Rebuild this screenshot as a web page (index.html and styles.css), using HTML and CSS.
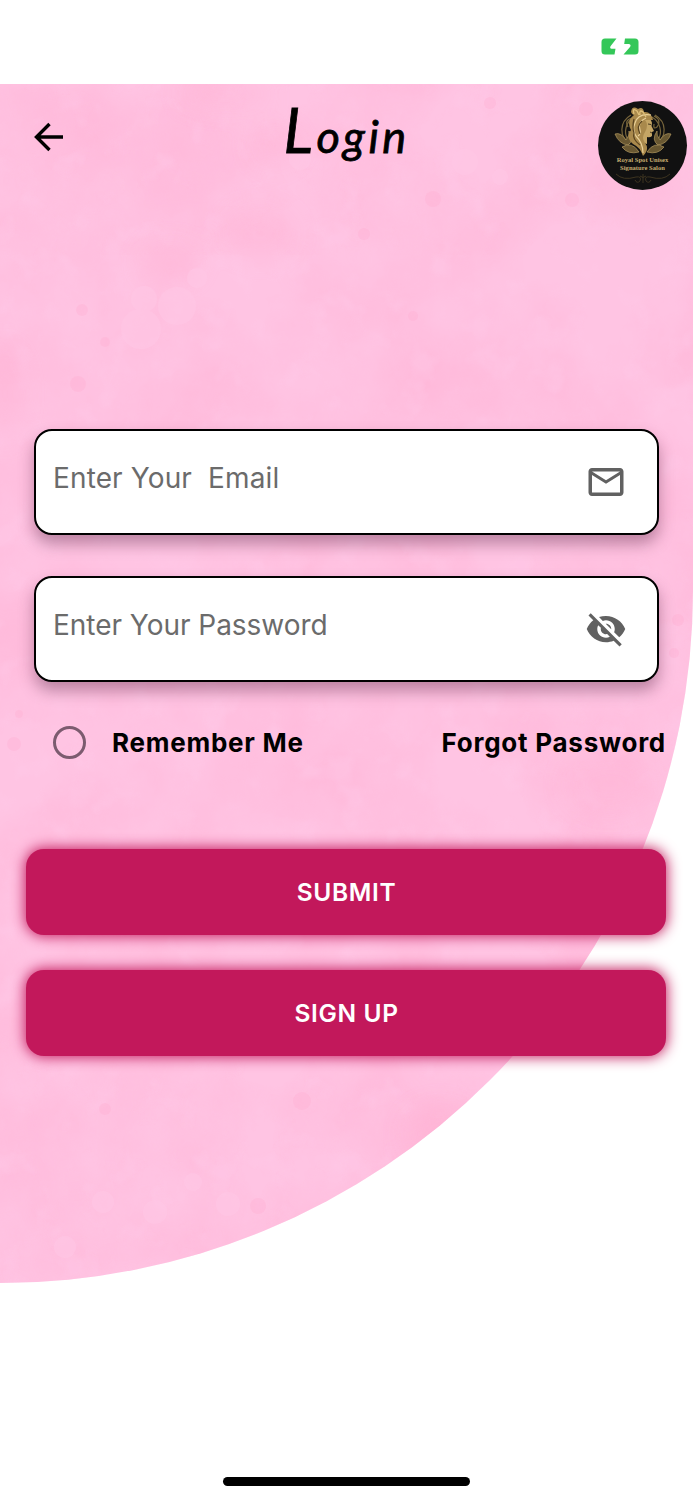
FILE: index.html
```
<!DOCTYPE html>
<html lang="en">

<head>
    <meta charset="UTF-8">
    <meta name="viewport" content="width=device-width, initial-scale=1.0">
    <title>Login</title>
    <link rel="stylesheet" href="styles.css">
</head>

<body>
    <div class="screen">
        <!-- pink paint behind the form -->
        <div class="paint">
            <svg width="693" height="1200" viewBox="0 0 693 1200">
                <defs>
                    <filter id="clouds" x="0" y="0" width="100%" height="100%" color-interpolation-filters="sRGB">
                        <feTurbulence type="fractalNoise" baseFrequency="0.009 0.008" numOctaves="6" seed="8" />
                        <feColorMatrix values="0 0 0 0 1  0 0 0 0 .69  0 0 0 0 .825  2 0 0 0 -.7" />
                    </filter>
                    <filter id="specks" x="0" y="0" width="100%" height="100%" color-interpolation-filters="sRGB">
                        <feTurbulence type="fractalNoise" baseFrequency="0.03" numOctaves="3" seed="21" />
                        <feColorMatrix values="0 0 0 0 1  0 0 0 0 .79  0 0 0 0 .91  0 4 0 0 -2.2" />
                    </filter>
                    <filter id="soft">
                        <feGaussianBlur stdDeviation="12" />
                    </filter>
                </defs>
                <rect width="693" height="1200" filter="url(#clouds)" opacity=".5" />
                <rect width="693" height="1200" filter="url(#specks)" opacity=".4" />
                <g fill="#ffabcd" opacity=".3" filter="url(#soft)">
                    <ellipse cx="275" cy="62" rx="22" ry="18" />
                    <ellipse cx="225" cy="10" rx="45" ry="14" />
                    <ellipse cx="260" cy="150" rx="35" ry="25" />
                    <ellipse cx="170" cy="180" rx="30" ry="20" />
                    <ellipse cx="5" cy="310" rx="20" ry="50" />
                    <ellipse cx="610" cy="700" rx="45" ry="30" />
                    <ellipse cx="440" cy="1050" rx="35" ry="28" />
                </g>
                <g fill="#ffc8e6" opacity=".5">
                    <circle cx="177" cy="222" r="19" />
                    <circle cx="141" cy="245" r="20" />
                    <circle cx="144" cy="215" r="13" />
                    <circle cx="197" cy="194" r="10" />
                    <circle cx="465" cy="78" r="13" />
                    <circle cx="500" cy="93" r="8" />
                    <circle cx="300" cy="75" r="11" />
                    <circle cx="228" cy="1120" r="12" />
                    <circle cx="193" cy="1098" r="9" />
                    <circle cx="103" cy="1118" r="11" />
                    <circle cx="155" cy="1128" r="12" />
                    <circle cx="65" cy="1163" r="11" />
                </g>
                <g fill="#ffacd0" opacity=".3">
                    <circle cx="82" cy="226" r="6" />
                    <circle cx="105" cy="258" r="5" />
                    <circle cx="78" cy="300" r="8" />
                    <circle cx="364" cy="150" r="6" />
                    <circle cx="413" cy="232" r="5" />
                    <circle cx="433" cy="115" r="8" />
                    <circle cx="572" cy="116" r="7" />
                    <circle cx="490" cy="19" r="6" />
                    <circle cx="586" cy="25" r="7" />
                    <circle cx="678" cy="536" r="6" />
                    <circle cx="674" cy="569" r="5" />
                    <circle cx="14" cy="660" r="7" />
                    <circle cx="19" cy="630" r="4" />
                    <circle cx="258" cy="1122" r="8" />
                    <circle cx="302" cy="1017" r="9" />
                    <circle cx="364" cy="1123" r="7" />
                    <circle cx="105" cy="1025" r="6" />
                </g>
            </svg>
        </div>

        <div class="statusbar">
            <svg class="battery" width="38" height="18" viewBox="0 0 38 18" fill="#34c759">
                <path d="M4 .5H15.500L9.500 8.200Q8.500 10.200 10.500 10.700H14.500L13.500 16.500H4Q.5 16.500 .5 13V4Q.5 .5 4 .5Z" />
                <path d="M24 .5H34Q37.500 .5 37.500 4V13Q37.500 16.500 34 16.500H22.500L29 9Q30.500 6.500 28 6H23.200Z" />
            </svg>
        </div>

        <div class="header">
            <svg class="back" width="30" height="30" viewBox="0 0 30 30" fill="none" stroke="#000" stroke-width="3.400">
                <path d="M29 15H3M15.500 2L2.500 15L15.500 28" />
            </svg>
            <h1>Login</h1>
            <div class="logo">
                <svg width="62" height="50" viewBox="0 0 62 50" fill="none">
                    <g stroke="#77653b" stroke-width="1.200">
                        <path d="M18 38C7 31 7 16 19 9M44 38C55 31 55 16 43 9" />
                        <path d="M16 34C11 26 14 16 22 11M46 34C51 26 48 16 40 11" />
                        <path d="M42 10Q50 14 45 21Q41 24 42 18M20 12Q12 14 16 21" />
                    </g>
                    <g fill="#695832" stroke="#b39a60" stroke-width=".7">
                        <path d="M3 28Q9 26 14 34Q18 29 17 25Q23 34 16 39Q7 38 3 28Z" />
                        <path d="M59 28Q53 26 48 34Q44 29 45 25Q39 34 46 39Q55 38 59 28Z" />
                        <path d="M10 41Q20 35 27 46Q16 49 10 41ZM52 41Q42 35 35 46Q46 49 52 41Z" />
                    </g>
                    <!-- face -->
                    <path d="M31 12Q39 11 40 17L39.500 20L42 25L40 26L40 30Q38 32 35 31L35 38Q29 37 28 30Z" fill="#c4a565" />
                    <path d="M36 18L39 18.500M38 26L40 27" stroke="#4d3b1c" />
                    <!-- hair -->
                    <path d="M41 14Q39 5 32 6Q31 0 26 3Q20 -1 19 6Q20 9 22 9Q14 15 19 24Q13 31 21 38Q28 41 31 50Q38 43 33 37Q29 32 33 26Q37 19 33 14Z" fill="#a9894c" />
                    <path d="M39 9Q26 7 23 17Q20 24 24 30Q31 37 31 47M34 12Q25 16 28 24Q29 28 26 30" stroke="#ead199" stroke-width="1.200" />
                    <path d="M22 13Q20 21 22 27Q20 33 28 39M30 15Q24 20 28 28" stroke="#59431f" stroke-width="1.200" />
                    <path d="M22 8Q20 1 25 5L27 9M28 9Q27 3 31 6L34 11" stroke="#e0c17b" stroke-width="1.300" />
                </svg>
                <p>Royal Spot Unisex<br>Signature Salon</p>
                <svg class="flourish" width="56" height="12" viewBox="0 0 56 12" fill="none" stroke="#3d3420">
                    <path d="M1 1Q8 8 21 4Q27 3 25 8Q22 11 20 7M55 1Q48 8 35 4Q29 3 31 8Q34 11 36 7M28 1V10M25 3Q28 6 31 3" />
                </svg>
            </div>
        </div>

        <form class="form">
            <div class="field">
                <input class="email" type="text" placeholder="Enter Your  Email">
                <svg width="42" height="42" viewBox="0 0 24 24" fill="#616161">
                    <path d="M22 6c0-1.100-.9-2-2-2H4c-1.100 0-2 .9-2 2v12c0 1.100.9 2 2 2h16c1.100 0 2-.9 2-2V6zm-2 0l-8 5-8-5h16zm0 12H4V8l8 5 8-5v10z" />
                </svg>
            </div>
            <div class="field">
                <input type="password" placeholder="Enter Your Password">
                <svg width="42" height="42" viewBox="0 0 24 24" fill="#616161">
                    <path d="M12 7c2.760 0 5 2.240 5 5 0 .65-.13 1.260-.36 1.830l2.920 2.920c1.510-1.260 2.700-2.890 3.430-4.750-1.730-4.390-6-7.500-11-7.500-1.400 0-2.740.25-3.980.7l2.160 2.160C10.740 7.130 11.350 7 12 7zM2 4.270l2.280 2.280.46.46C3.080 8.300 1.780 10.020 1 12c1.730 4.390 6 7.500 11 7.500 1.550 0 3.030-.3 4.380-.84l.42.42L19.730 22 21 20.730 3.270 3 2 4.270zM7.530 9.800l1.550 1.550c-.05.21-.08.43-.08.65 0 1.660 1.340 3 3 3 .22 0 .44-.03.65-.08l1.550 1.550c-.67.33-1.410.53-2.200.53-2.760 0-5-2.240-5-5 0-.79.2-1.530.53-2.200zm4.310-.78l3.150 3.150.02-.16c0-1.660-1.340-3-3-3l-.17.01z" />
                </svg>
            </div>

            <div class="options">
                <label class="remember">
                    <span class="radio"></span>
                    <span>Remember Me</span>
                </label>
                <span class="forgot">Forgot Password</span>
            </div>

            <div class="buttons">
                <button type="button">SUBMIT</button>
                <button type="button">SIGN UP</button>
            </div>
        </form>

        <div class="homebar"></div>
    </div>
</body>

</html>
```
FILE: styles.css
```
* {
    box-sizing: border-box;
}

body {
    margin: 0;
    background-color: #fff;
    color: #000;
    font-family: Inter, "Liberation Sans", sans-serif;
}

.screen {
    position: relative;
    display: flex;
    flex-direction: column;
    width: 693px;
    height: 1500px;
    overflow: hidden;
}

.paint {
    position: absolute;
    top: 84px;
    left: 0;
    z-index: -1;
    width: 693px;
    height: 1199px;
    overflow: hidden;
    background-color: #ffc4e3;
    border-bottom-right-radius: 693px;
}

.statusbar {
    display: flex;
    justify-content: flex-end;
    height: 84px;
    padding: 38px 54px 0 0;
}

.header {
    display: grid;
    grid-template-columns: 89px 1fr 89px;
    height: 345px;
    padding: 17px 6px 0 6px;
    align-items: start;
}

.back {
    margin: 21px 0 0 28px;
}

h1 {
    margin: 0;
    font-family: Lato, sans-serif;
    font-size: 45px;
    font-style: italic;
    font-weight: 400;
    letter-spacing: 3.5px;
    line-height: 56px;
    text-align: center;
    -webkit-text-stroke: 0.8px #000;
}

h1::first-letter {
    font-size: 62px;
}

.logo {
    display: flex;
    flex-direction: column;
    align-items: center;
    width: 89px;
    height: 89px;
    padding-top: 5px;
    border-radius: 50%;
    background-color: #111;
}

.logo p {
    margin: 0;
    color: #c5ad70;
    font-family: "Liberation Serif", serif;
    font-size: 6.6px;
    font-weight: bold;
    line-height: 8px;
    text-align: center;
    white-space: nowrap;
}

.flourish {
    margin-top: 1px;
}

.field {
    display: flex;
    align-items: center;
    width: 625px;
    height: 106px;
    margin: 0 0 41px 34px;
    padding: 0 30px 0 17px;
    background-color: #fff;
    border: 2px solid #000;
    border-radius: 18px;
    box-shadow: 0 9px 15px rgba(70, 20, 50, 0.36);
}

.field input {
    flex-grow: 1;
    min-width: 0;
    height: 60px;
    margin-bottom: 9px;
    padding: 0;
    border: none;
    outline: none;
    background: none;
    font-family: inherit;
    font-size: 28px;
    letter-spacing: -0.03px;
}

.field .email {
    letter-spacing: 0.13px;
}

.field input::placeholder {
    color: #6b6b6b;
    opacity: 1;
}

.options {
    display: flex;
    justify-content: space-between;
    align-items: center;
    height: 38px;
    padding: 0 27px 0 53px;
    font-size: 26px;
    font-weight: 700;
    letter-spacing: 0.75px;
}

.remember {
    display: flex;
    align-items: center;
    gap: 26px;
}

.radio {
    width: 33px;
    height: 33px;
    border: 3.5px solid #7c5b6f;
    border-radius: 50%;
}

.buttons {
    display: flex;
    flex-direction: column;
    gap: 35px;
    margin: 88px 27px 0 26px;
}

.buttons button {
    height: 86px;
    padding: 0 0 1px 1px;
    border: none;
    border-radius: 18px;
    background-color: #c2185b;
    box-shadow: 0 0 14px 1px #c2185b;
    color: #fff;
    font-family: inherit;
    font-size: 24.5px;
    font-weight: 600;
    letter-spacing: 0.65px;
}

.homebar {
    width: 247px;
    height: 9px;
    margin: auto auto 14px 223px;
    border-radius: 5px;
    background-color: #000;
}
```
